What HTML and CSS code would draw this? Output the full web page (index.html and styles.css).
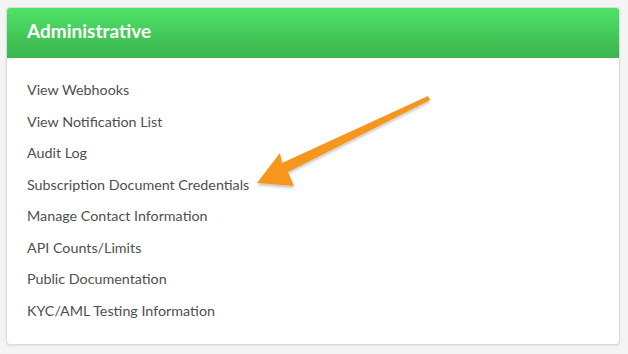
FILE: index.html
```html
<!DOCTYPE html>
<html lang="en">
<head>
    <meta charset="UTF-8">
    <meta name="viewport" content="width=device-width, initial-scale=1.0">
    <title>Administrative</title>
    <link rel="stylesheet" href="styles.css">
</head>
<body>
    <div class="panel">
        <div class="panel-heading">
            <h3>Administrative</h3>
        </div>
        <ul class="panel-list">
            <li><a href="#">View Webhooks</a></li>
            <li><a href="#">View Notification List</a></li>
            <li><a href="#">Audit Log</a></li>
            <li><a href="#">Subscription Document Credentials</a></li>
            <li><a href="#">Manage Contact Information</a></li>
            <li><a href="#">API Counts/Limits</a></li>
            <li><a href="#">Public Documentation</a></li>
            <li><a href="#">KYC/AML Testing Information</a></li>
        </ul>
    </div>

    <!-- callout arrow pointing at the credentials link -->
    <svg class="callout" width="628" height="354" viewBox="0 0 628 354">
        <defs>
            <filter id="shadow" x="-10%" y="-10%" width="120%" height="130%">
                <feDropShadow dx="0" dy="2" stdDeviation="1.5" flood-color="#000" flood-opacity="0.25"/>
            </filter>
        </defs>
        <polygon filter="url(#shadow)" fill="#f7961e"
                 points="257,183 280,153 282,163 428,96 430,100 288,172 294,186"/>
    </svg>
</body>
</html>
```

FILE: styles.css
```css
body {
    margin: 0;
    background-color: #f4f4f4;
    font-family: Lato, "Open Sans", sans-serif;
    position: relative;
    height: 354px;
    overflow: hidden;
}

.panel {
    margin: 7px 8px 0 6px;
    height: 338px;
    box-sizing: border-box;
    background-color: #fff;
    border: 1px solid #dcdcdc;
    border-radius: 4px;
    box-shadow: 0 1px 2px rgba(0, 0, 0, 0.08);
    overflow: hidden;
}

.panel-heading {
    height: 50px;
    background: linear-gradient(to bottom, #4ee267, #3bb44d);
    padding: 0 20px;
    display: flex;
    align-items: center;
}

.panel-heading h3 {
    margin: 0 0 5px 0;
    color: #fff;
    font-size: 19px;
    font-weight: bold;
}

.panel-list {
    list-style: none;
    margin: 0;
    padding: 16px 20px 0 20px;
}

.panel-list li {
    line-height: 31.5px;
    font-size: 14.3px;
}

.panel-list a {
    color: #4f4f4f;
    text-decoration: none;
}

.callout {
    position: absolute;
    left: 0;
    top: 0;
    pointer-events: none;
}
```
